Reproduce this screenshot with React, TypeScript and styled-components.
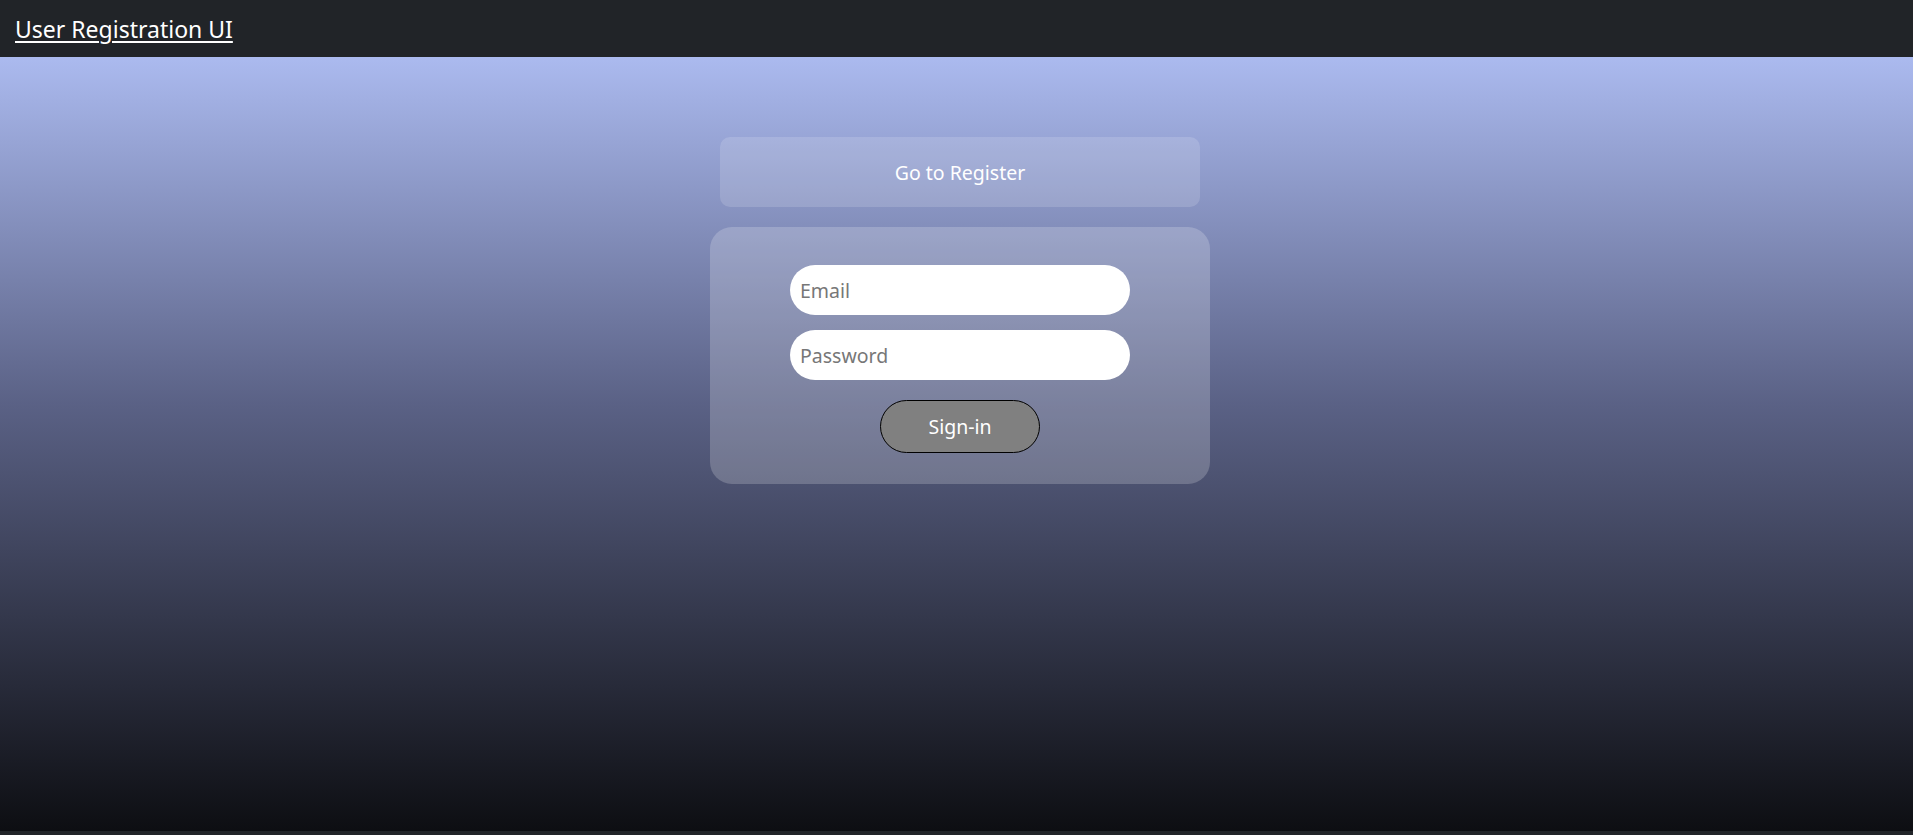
import React from "react";
import styled, { createGlobalStyle } from "styled-components";

const GlobalStyle = createGlobalStyle`
  html, body {
    margin: 0;
    padding: 0;
    background: #222529;
    font-family: "Noto Sans", "Open Sans", sans-serif;
  }
  * { box-sizing: border-box; }
`;

const Page = styled.div`
  display: flex;
  flex-direction: column;
  min-height: 831px;
`;

const Header = styled.header`
  height: 57px;
  background: #212428;
  display: flex;
  align-items: center;
  padding: 0 15px;
`;

const Brand = styled.a`
  color: #ffffff;
  font-size: 23px;
  text-decoration: underline;
  text-underline-offset: 3px;
  text-decoration-thickness: 1.5px;
  line-height: 1;
  margin-top: 2px;
  cursor: pointer;
`;

const Main = styled.main`
  flex: 1;
  height: 774px;
  background: linear-gradient(to bottom, #abbaef 0%, #5a6185 45%, #0d0e12 100%);
  display: flex;
  flex-direction: column;
  align-items: center;
  padding-top: 80px;
  padding-left: 7px;
  gap: 20px;
`;

const RegisterLink = styled.button`
  width: 480px;
  height: 70px;
  border: none;
  border-radius: 10px;
  background: rgba(255, 255, 255, 0.15);
  color: #ffffff;
  font-family: inherit;
  font-size: 19.5px;
  cursor: pointer;
`;

const Card = styled.form`
  width: 500px;
  height: 257px;
  border-radius: 22px;
  background: rgba(255, 255, 255, 0.2);
  display: flex;
  flex-direction: column;
  align-items: center;
  padding-top: 38px;
  gap: 15px;
`;

const Input = styled.input`
  width: 340px;
  height: 50px;
  border: none;
  border-radius: 25px;
  background: #ffffff;
  padding: 0 10px;
  font-family: inherit;
  font-size: 19.5px;
  color: #333;
  outline: none;
  &::placeholder {
    color: #777777;
  }
`;

const SubmitButton = styled.button`
  margin-top: 5px;
  width: 160px;
  height: 53px;
  border: 1px solid #000000;
  border-radius: 27px;
  background: #808080;
  color: #ffffff;
  font-family: inherit;
  font-size: 19.5px;
  cursor: pointer;
`;

export default function App() {
  return (
    <>
      <GlobalStyle />
      <Page>
        <Header>
          <Brand>User Registration UI</Brand>
        </Header>
        <Main>
          <RegisterLink type="button">Go to Register</RegisterLink>
          <Card onSubmit={(e) => e.preventDefault()}>
            <Input type="email" placeholder="Email" />
            <Input type="password" placeholder="Password" />
            <SubmitButton type="submit">Sign-in</SubmitButton>
          </Card>
        </Main>
      </Page>
    </>
  );
}
